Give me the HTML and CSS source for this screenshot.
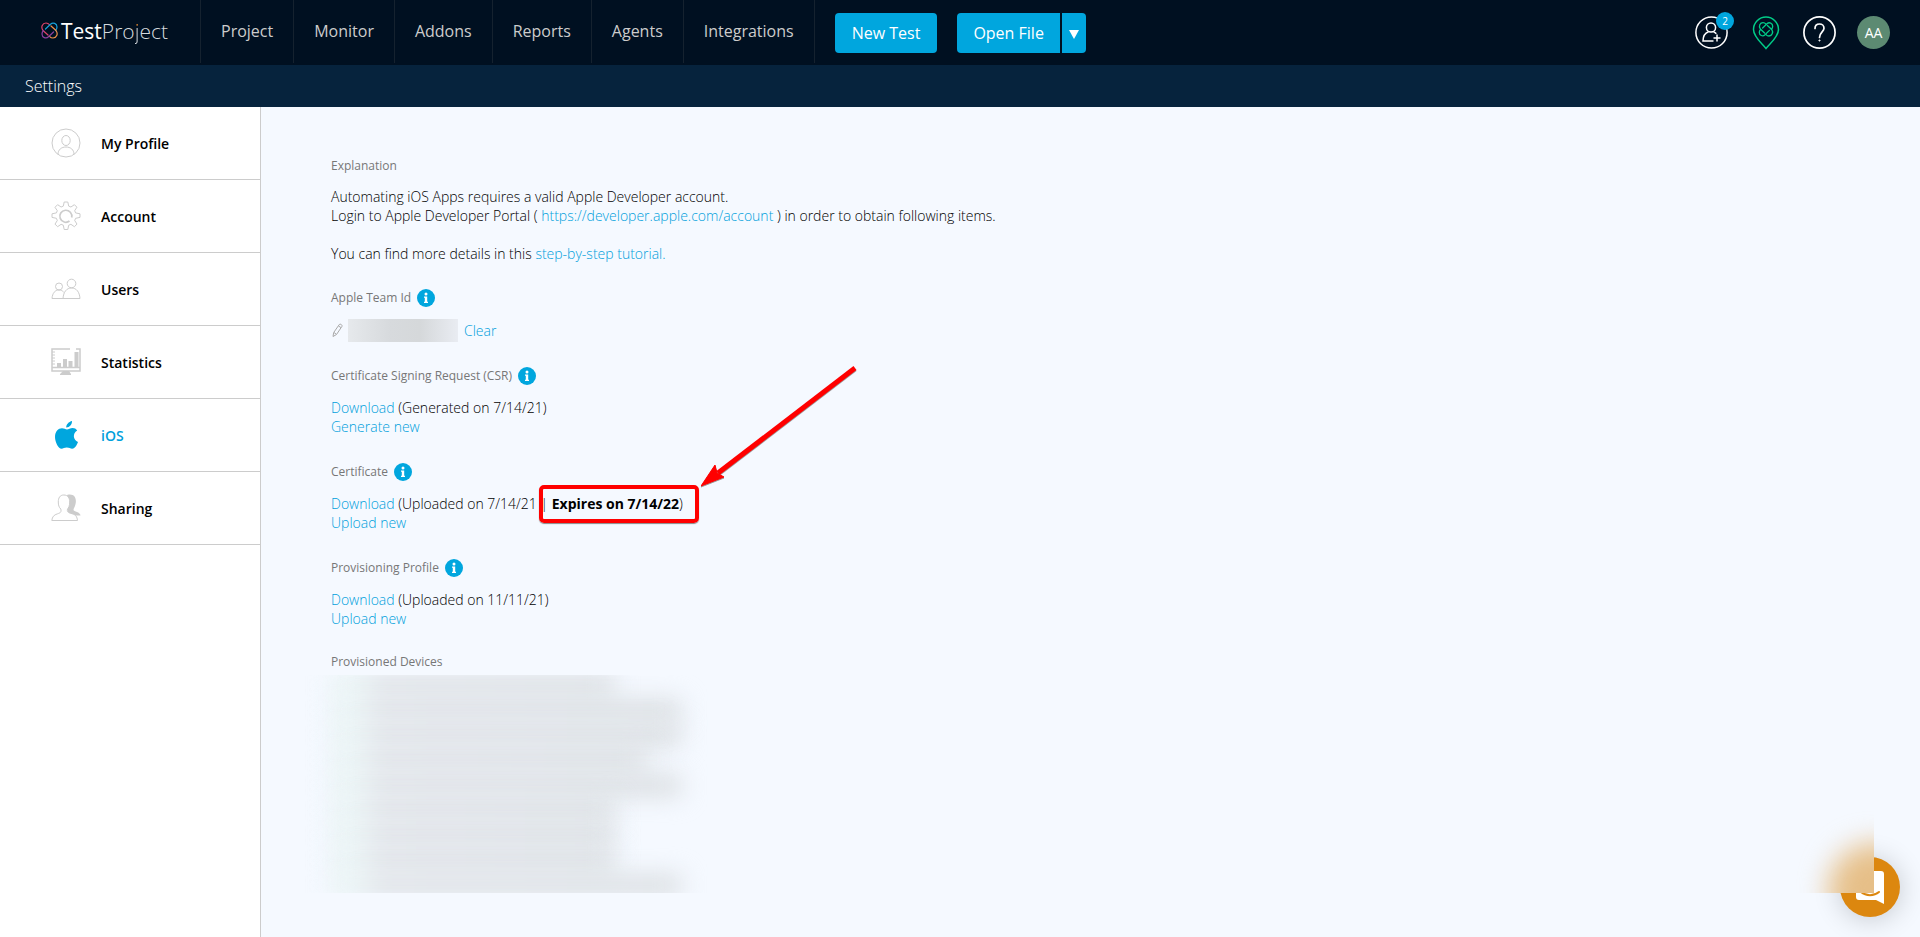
FILE: index.html
```html
<!DOCTYPE html>
<html lang="en">
<head>
<meta charset="utf-8">
<title>TestProject - Settings</title>
<link rel="stylesheet" href="styles.css">
</head>
<body>
<svg class="defs" width="0" height="0" aria-hidden="true">
  <symbol id="info" viewBox="0 0 18 18">
    <circle cx="9" cy="9" r="9" fill="#00a6de"/>
    <circle cx="9" cy="5" r="1.5" fill="#fff"/>
    <path d="M7 7.500h3.200v5.200h.8v1.300H7v-1.300h.8V8.700H7z" fill="#fff"/>
  </symbol>
</svg>
<header class="topbar">
  <a class="logo" href="#">
    <svg width="17" height="17" viewBox="0 0 17 17" fill="none" stroke-width="1.200" stroke-linecap="round">
      <path d="M7 13 2 8.500C-.5 5 1.500 1 5 1c1.600 0 2.500.6 3.500 1.700" stroke="#e0446b"/>
      <path d="M4.500 7 9.500 2.200C12-.2 16 1.500 16 5c0 1.600-.6 2.600-1.500 3.500" stroke="#16a0d8"/>
      <path d="M10 4l5 4.500c2.500 3.500.5 7.500-3 7.500-1.600 0-2.500-.6-3.500-1.700" stroke="#f0904a"/>
      <path d="M12.500 10 7.500 14.800C5 17.200 1 15.500 1 12c0-1.600.6-2.600 1.500-3.500" stroke="#8a3fa0"/>
    </svg>
    <span class="logo-text"><b>Test</b>Pro<span class="logo-j">j</span>ect</span>
  </a>
  <nav class="nav">
    <a href="#">Project</a><a href="#">Monitor</a><a href="#">Addons</a><a href="#">Reports</a><a href="#">Agents</a><a href="#">Integrations</a>
  </nav>
  <div class="actions">
    <button class="btn">New Test</button>
    <div class="split">
      <button class="btn btn-left">Open File</button>
      <button class="btn btn-right" aria-label="More open options"><svg width="10" height="9" viewBox="0 0 10 9"><path d="M0 0h10L5 9z" fill="#fff"/></svg></button>
    </div>
  </div>
  <div class="tools">
    <button class="tool" aria-label="Invite users">
      <svg width="33" height="33" viewBox="0 0 33 33" fill="none" stroke="#fff" stroke-width="1.500">
        <circle cx="16.500" cy="16.500" r="15.600"/>
        <circle cx="16" cy="11.500" r="4.600"/>
        <path d="M18.500 25H8c0-4.500 2-8 5.500-9.300M18.500 15.700c1.200.4 2.100 1.100 2.800 2M22 18.500v7M18.500 22h7"/>
      </svg>
      <span class="badge">2</span>
    </button>
    <button class="tool" aria-label="Agent status">
      <svg width="28" height="34" viewBox="0 0 28 34" fill="none" stroke="#0c8" stroke-width="1.500">
        <path d="M14 32.500C10 27.500 1.500 21 1.500 13.500a12.500 12.500 0 0 1 25 0C26.500 21 18 27.500 14 32.500z"/>
        <g stroke-width="1.300" stroke-linecap="round">
          <path d="M12.600 17 8.300 13C6.300 10 8 6.700 11 6.700c1.400 0 2.200.5 3 1.400"/>
          <path d="M10.600 12 15 7.700C17.300 5.700 20.700 7.200 20.700 10.200c0 1.400-.5 2.300-1.300 3"/>
          <path d="M15.400 9.400 19.700 13.400C21.700 16.400 20 20 17 20c-1.400 0-2.200-.5-3-1.400"/>
          <path d="M17.400 14.400 13 18.800C10.700 20.900 7.300 19.400 7.300 16.400c0-1.400.5-2.300 1.300-3"/>
        </g>
      </svg>
    </button>
    <button class="tool" aria-label="Help">
      <svg width="33" height="33" viewBox="0 0 33 33" fill="none" stroke="#fff" stroke-width="1.700">
        <circle cx="16.500" cy="16.500" r="15.600"/>
        <path d="M12 12.500c0-3 2-4.500 4.500-4.500s4.500 1.700 4.500 4.200c0 3.500-4.500 4-4.500 9.300" stroke-linecap="round"/>
        <circle cx="16.500" cy="24.500" r=".6" fill="#fff" stroke-width="1"/>
      </svg>
    </button>
    <button class="avatar">AA</button>
  </div>
</header>
<div class="subbar">Settings</div>
<div class="page">
  <nav class="side" aria-label="Settings">
    <a href="#"><svg width="30" height="30" viewBox="0 0 30 30"><circle cx="15" cy="15" r="14"/><ellipse cx="15" cy="12.500" rx="4.200" ry="5"/><path d="M7 26.500c0-5 3.500-7.500 8-7.500s8 2.500 8 7.500"/></svg>My Profile</a>
    <a href="#"><svg width="30" height="30" viewBox="0 0 30 30"><path d="M13.200 1h3.600l.9 4.100 2.200.9 3.500-2.300 2.500 2.500L23.700 9.700l.9 2.200 4.400.9v3.600l-4.400.9-.9 2.200 2.300 3.600-2.600 2.600-3.500-2.400-2.200.9-.9 4.300h-3.600l-.9-4.300-2.200-.9-3.500 2.400L4 23.100l2.300-3.600-.9-2.200L1 16.400v-3.600l4.400-.9.9-2.200L4 6.300l2.600-2.600L10.100 6l2.200-.9z" stroke-linejoin="round"/><path d="M18.500 20A6 6 0 1 1 20.700 16.500" stroke-width="1.700"/></svg>Account</a>
    <a href="#"><svg width="30" height="30" viewBox="0 -3 30 30"><circle cx="8" cy="9.500" r="3.500"/><circle cx="20.500" cy="6.500" r="4.300"/><path d="M12 21.500H1C1.500 16 4 13 8 13c2 0 3.500.8 4.700 2.200M12 21.500C12.500 15 15.500 11 20.500 11S28.500 15 29 21.500z"/></svg>Users</a>
    <a href="#"><svg width="30" height="30" viewBox="0 0 30 30"><path d="M19 2H1v22h28V2h-4M1 20.500h28" stroke-width="1.500"/><path d="M1 5h3M1 8h3M1 11h3M1 14h3M1 17h3"/><path d="M6 16h4v4H6zM12 12h4v8h-4zM17.500 14h4v6h-4zM23.500 5h4v15h-4zM12 24h6l2 3v1H9v-1z" fill="#ccc" stroke="none"/></svg>Statistics</a>
    <a class="current" href="#"><svg width="30" height="30" viewBox="0 0 30 30"><path d="M21 1c.2 3.500-2.300 6.300-5.800 6.500C15.200 4.500 17.700 1.700 21 1zM26.200 10.500c-5 3-4 9.500.8 11.500-1.200 3.500-3.500 6.700-5.800 6.800-1.900 0-2.900-1.200-5.400-1.200s-3.500 1.200-5.300 1.200C7.500 28.800 4 22.300 4 17c0-5.500 3.300-8.800 7-8.800 2 0 3.500 1.200 5 1.200s3.200-1.400 5.700-1.400c1.700 0 3.500.8 4.500 2.500z" fill="#00a6de" stroke="none"/></svg>iOS</a>
    <a href="#"><svg width="30" height="30" viewBox="0 0 30 30"><path d="M16 2c7-2 10 3 8.500 9-.5 3-2 4-2 6 0 1.500 7 2 7 5.500H20l-3-4V6z" fill="#ccc" stroke="none"/><path d="M12.800 2C17 2 18.700 5 18.700 9s-1.200 6-2.200 7c-.5 3 .2 3.500 4.500 4.700 4 1.200 5 3 5.500 6.800H.8c.5-3.800 2-5.500 5.700-6.700 3.300-1 4-2 3.300-4.800C8 14.500 7.300 12 7.300 9c0-4 1.500-7 5.500-7z" fill="#fff"/></svg>Sharing</a>
  </nav>
  <main class="main">
    <section class="block">
      <h2>Explanation</h2>
      <p>Automating iOS Apps requires a valid Apple Developer account.<br>Login to Apple Developer Portal ( <a href="#">https://developer.apple.com/account</a> ) in order to obtain following items.</p>
      <p class="para">You can find more details in this <a href="#">step-by-step tutorial.</a></p>
    </section>
    <section class="block">
      <h2>Apple Team Id <svg class="info" width="18" height="18"><use href="#info"/></svg></h2>
      <div class="team">
        <button class="edit" aria-label="Edit team id"><svg width="11" height="15" viewBox="0 0 11 15" fill="none" stroke="#aaa"><path d="M1 13.500l.7-4L7.300 1.500c1-1 3.200.3 2.700 1.800L4.500 11.500zM6.500 3l2.500 1.600M2 9.500l2.300 1.700"/></svg></button>
        <span class="hidden-id"></span>
        <a href="#">Clear</a>
      </div>
    </section>
    <section class="block">
      <h2>Certificate Signing Request (CSR) <svg class="info" width="18" height="18"><use href="#info"/></svg></h2>
      <p><a href="#">Download</a> (Generated on 7/14/21)<br><a href="#">Generate new</a></p>
    </section>
    <section class="block">
      <h2>Certificate <svg class="info" width="18" height="18"><use href="#info"/></svg></h2>
      <p><a href="#">Download</a> (Uploaded on 7/14/21 <span class="expiry">| <b>Expires on 7/14/22</b>)<svg class="arrow" width="158" height="124" viewBox="0 0 158 124"><path d="M154 3 17 108" stroke="#f00" stroke-width="5"/><path d="M0 121 14 100 16 108 23 112z" fill="#f00" stroke="#f00"/></svg></span><br><a href="#">Upload new</a></p>
    </section>
    <section class="block last">
      <h2>Provisioning Profile <svg class="info" width="18" height="18"><use href="#info"/></svg></h2>
      <p><a href="#">Download</a> (Uploaded on 11/11/21)<br><a href="#">Upload new</a></p>
    </section>
    <section class="block">
      <h2>Provisioned Devices</h2>
      <div class="devices">
        <i></i><i class="long"></i><i class="long"></i><i class="mid"></i><i class="long"></i><i></i><i></i><i></i><i class="long"></i>
      </div>
    </section>
  </main>
</div>
<button class="chat" aria-label="Open chat"><svg width="28" height="33" viewBox="0 0 28 33"><path d="M3 0h22q3 0 3 3v30l-8-4H3q-3 0-3-3V3q0-3 3-3z" fill="#fff"/><path d="M5 21c5 4.300 13 4.300 18 0" fill="none" stroke="#dc870f" stroke-width="2" stroke-linecap="round"/></svg></button>
<div class="haze"><i></i></div>
</body>
</html>
```
FILE: styles.css
```css
* { box-sizing: border-box; }
body {
  margin: 0;
  min-height: 100vh;
  display: flex;
  flex-direction: column;
  font-family: "Open Sans", sans-serif;
  font-size: 14px;
  line-height: 19px;
  font-weight: 300;
  color: #000;
  background: #f5f9ff;
}
a { color: #00a0dc; text-decoration: none; }
button { font: inherit; border: 0; padding: 0; background: none; cursor: pointer; }
svg { flex: none; }
.defs { position: absolute; }

.topbar { display: flex; height: 65px; background: #001021; }
.logo { display: flex; align-items: center; gap: 3px; width: 200px; padding: 0 0 4px 41px; color: #d5dade; }
.logo-text { font-size: 21px; line-height: 28px; }
.logo-text b { font-weight: 500; color: #fff; }
.logo-j {
  color: transparent;
  background: linear-gradient(#f79433 10px, #d5dade 10px);
  background-clip: text;
}
.nav { display: flex; height: 63px; border-left: 1px solid #15222f; }
.nav a {
  padding: 20px 20px 0;
  border-right: 1px solid #15222f;
  font-size: 16px;
  line-height: 22px;
  font-weight: 400;
  color: #ccc;
}
.actions { display: flex; gap: 20px; padding: 13px 0 0 20px; }
.split { display: flex; gap: 2px; }
.btn { height: 40px; padding: 0 17px; border-radius: 4px; background: #00a6de; color: #fff; font-size: 16px; font-weight: 400; }
.btn-left { padding: 0 16px; border-radius: 4px 0 0 4px; }
.btn-right { width: 24px; padding: 0; border-radius: 0 4px 4px 0; }
.tools { display: flex; align-items: center; margin-left: auto; padding-right: 30px; gap: 21px; }
.tool { position: relative; display: flex; justify-content: center; width: 33px; }
.badge {
  position: absolute;
  top: -4px;
  right: -6px;
  width: 18px;
  border-radius: 9px;
  background: #00a6de;
  color: #fff;
  font-size: 10px;
  line-height: 18px;
  font-weight: 400;
}
.avatar { width: 33px; height: 33px; border-radius: 50%; background: #5c8a72; color: #fff; font-size: 14px; font-weight: 500; }

.subbar { height: 42px; padding: 10px 25px; background: #06233d; color: #fff; font-size: 16px; line-height: 22px; }

.page { flex: 1; display: flex; }
.side { width: 261px; background: #fff; border-right: 1px solid #ccc; }
.side a {
  display: flex;
  align-items: center;
  gap: 20px;
  height: 73px;
  padding-left: 51px;
  border-bottom: 1px solid #ccc;
  font-weight: 600;
  color: #000;
}
.side svg { fill: none; stroke: #ccc; }
.side .current { color: #00a0dc; }

.main { flex: 1; padding: 49px 70px 20px; }
.block { margin-bottom: 26px; }
.block:first-child { margin-bottom: 25px; }
.last { margin-bottom: 24px; }
.block h2 { display: flex; align-items: center; gap: 6px; margin: 0 0 13px; font-size: 12px; line-height: 19px; font-weight: 400; color: #777; }
.block:first-child h2 { margin-bottom: 12px; }
.block p { margin: 0; }
.block .para { margin-top: 19px; }
.team { display: flex; align-items: center; height: 20px; }
.edit { display: flex; width: 17px; padding-left: 1px; }
.hidden-id { width: 110px; height: 23px; margin-right: 6px; background: linear-gradient(90deg, #e6e9ec, #d7dadd 38%, #d5d8da 65%, #e9ecf2); }
.expiry { position: relative; }
.expiry b { font-weight: 700; }
.expiry::after {
  content: "";
  position: absolute;
  inset: -9px -16px -10px -2px;
  border: 4px solid #f00;
  border-radius: 5px;
  box-shadow: 0 1px 1px #888;
}
.arrow { position: absolute; left: 160px; bottom: 24px; filter: drop-shadow(0 1px 0 #999); }
.devices {
  display: flex;
  flex-direction: column;
  gap: 4px;
  width: 430px;
  height: 218px;
  margin: -9px 0 0 -35px;
  padding-left: 35px;
  overflow: hidden;
}
.devices i {
  flex: none;
  width: 284px;
  height: 21px;
  background: linear-gradient(90deg, #e8f3f2 30px, #dde0e4 45px, #d9dde0);
  filter: blur(12px);
}
.devices .mid { width: 315px; }
.devices .long { width: 350px; }

.chat {
  position: fixed;
  right: 20px;
  bottom: 20px;
  display: flex;
  align-items: center;
  justify-content: center;
  width: 60px;
  height: 60px;
  border-radius: 50%;
  background: #dc870f;
  box-shadow: 0 2px 28px #0003;
}
.haze { position: fixed; right: 46px; bottom: 44px; width: 94px; height: 90px; overflow: hidden; background: #f5f9ff; }
.haze i { position: absolute; right: -50px; bottom: -46px; width: 96px; height: 96px; border-radius: 50%; background: #e6bf88; filter: blur(14px); }
```
